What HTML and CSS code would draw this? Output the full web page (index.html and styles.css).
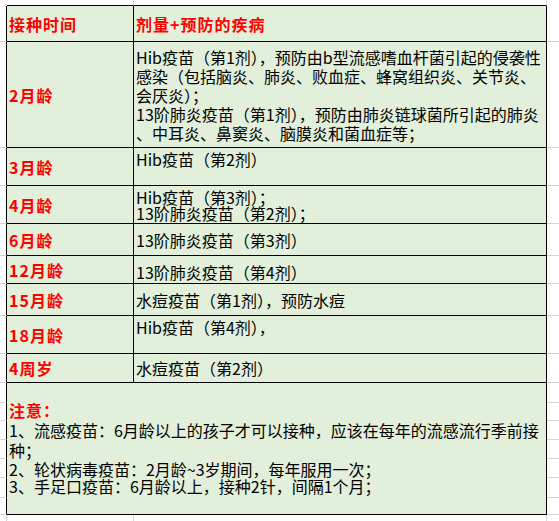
FILE: index.html
```html
<!DOCTYPE html>
<html lang="zh-CN">
<head>
<meta charset="utf-8">
<title>疫苗接种时间表</title>
<link rel="stylesheet" href="styles.css">
</head>
<body>
<div class="sheet">
  <!-- row 0 -->
  <div class="c"></div>
  <div class="c top"></div>
  <div class="c top"></div>
  <div class="c"></div>

  <!-- header -->
  <div class="c edge-l"></div>
  <div class="c cell label">接种时间</div>
  <div class="c cell label">剂量+预防的疾病</div>
  <div class="c edge-r"></div>

  <div class="c edge-l"></div>
  <div class="c cell label">2月龄</div>
  <div class="c cell multi">
    <div>Hib疫苗（第1剂），预防由b型流感嗜血杆菌引起的侵袭性</div>
    <div>感染（包括脑炎、肺炎、败血症、蜂窝组织炎、关节炎、</div>
    <div>会厌炎）；</div>
    <div>13阶肺炎疫苗（第1剂），预防由肺炎链球菌所引起的肺炎</div>
    <div>、中耳炎、鼻窦炎、脑膜炎和菌血症等；</div>
  </div>
  <div class="c edge-r"></div>

  <div class="c edge-l"></div>
  <div class="c cell label">3月龄</div>
  <div class="c cell al-top"><div>Hib疫苗（第2剂）</div></div>
  <div class="c edge-r"></div>

  <div class="c edge-l"></div>
  <div class="c cell label">4月龄</div>
  <div class="c cell al-top">
    <div>Hib疫苗（第3剂）；</div>
    <div>13阶肺炎疫苗（第2剂）；</div>
  </div>
  <div class="c edge-r"></div>

  <div class="c edge-l"></div>
  <div class="c cell label">6月龄</div>
  <div class="c cell"><div>13阶肺炎疫苗（第3剂）</div></div>
  <div class="c edge-r"></div>

  <div class="c edge-l"></div>
  <div class="c cell label">12月龄</div>
  <div class="c cell low"><div>13阶肺炎疫苗（第4剂）</div></div>
  <div class="c edge-r"></div>

  <div class="c edge-l"></div>
  <div class="c cell label">15月龄</div>
  <div class="c cell"><div>水痘疫苗（第1剂），预防水痘</div></div>
  <div class="c edge-r"></div>

  <div class="c edge-l"></div>
  <div class="c cell label">18月龄</div>
  <div class="c cell al-top"><div>Hib疫苗（第4剂），</div></div>
  <div class="c edge-r"></div>

  <div class="c edge-l"></div>
  <div class="c cell label">4周岁</div>
  <div class="c cell"><div>水痘疫苗（第2剂）</div></div>
  <div class="c edge-r"></div>

  <!-- notes rows -->
  <div class="c edge-l"></div>
  <div class="c cell notes">
    <div class="ln l20 label">注意：</div>
    <div class="ln l20">1、流感疫苗：6月龄以上的孩子才可以接种，应该在每年的流感流行季前接</div>
    <div class="ln l20">种；</div>
    <div class="ln l17">2、轮状病毒疫苗：2月龄~3岁期间，每年服用一次；</div>
    <div class="ln l17">3、手足口疫苗：6月龄以上，接种2针，间隔1个月；</div>
  </div>
  <div class="c edge-r"></div>
  <div class="c edge-l"></div><div class="c edge-r"></div>
  <div class="c edge-l"></div><div class="c edge-r"></div>
  <div class="c edge-l"></div><div class="c edge-r"></div>
  <div class="c edge-l"></div><div class="c edge-r"></div>
  <div class="c edge-l"></div><div class="c edge-r"></div>
  <div class="c edge-l"></div><div class="c edge-r"></div>

  <!-- bottom row -->
  <div class="c foot"></div>
  <div class="c foot"></div>
  <div class="c foot"></div>
  <div class="c"></div>
</div>
</body>
</html>
```

FILE: styles.css
```css
html, body {
  margin: 0;
  padding: 0;
  background: #ffffff;
}

body {
  font-family: "Noto Sans CJK SC", "Noto Sans", sans-serif;
  font-size: 16px;
  color: #000000;
}

.sheet {
  display: grid;
  grid-template-columns: 7px 127px 413px 12px;
  grid-template-rows: 6px 36px 106px 38px 38px 32px 28px 32px 38px 29px 20px 18px 19px 19px 19px 20px 17px 6px;
  width: 559px;
  height: 521px;
  overflow: hidden;
}

.c {
  box-sizing: border-box;
  min-width: 0;
}

.top {
  border-bottom: 1px solid #000000;
  border-right: 1px solid #d4d4d4;
}

.edge-l {
  border-right: 1px solid #000000;
  border-bottom: 1px solid #d4d4d4;
}

.edge-r {
  border-bottom: 1px solid #d4d4d4;
}

.foot {
  border-right: 1px solid #d4d4d4;
}

.cell {
  background: #e2efda;
  border-right: 1px solid #000000;
  border-bottom: 1px solid #000000;
  display: flex;
  flex-direction: column;
  justify-content: center;
  padding-left: 2px;
  white-space: nowrap;
  line-height: 16px;
  overflow: visible;
}

.label {
  color: #ff0000;
  font-weight: bold;
  letter-spacing: 1px;
}

.multi {
  line-height: 19px;
  padding-top: 2px;
}

.al-top {
  justify-content: flex-start;
  padding-top: 3px;
}

.low {
  padding-top: 5px;
}

.notes {
  grid-column: 2 / 4;
  grid-row: span 7;
  justify-content: flex-start;
  padding-top: 17px;
}

.ln {
  display: flex;
  align-items: center;
}

.l20 {
  height: 20px;
}

.l17 {
  height: 17px;
}
```
